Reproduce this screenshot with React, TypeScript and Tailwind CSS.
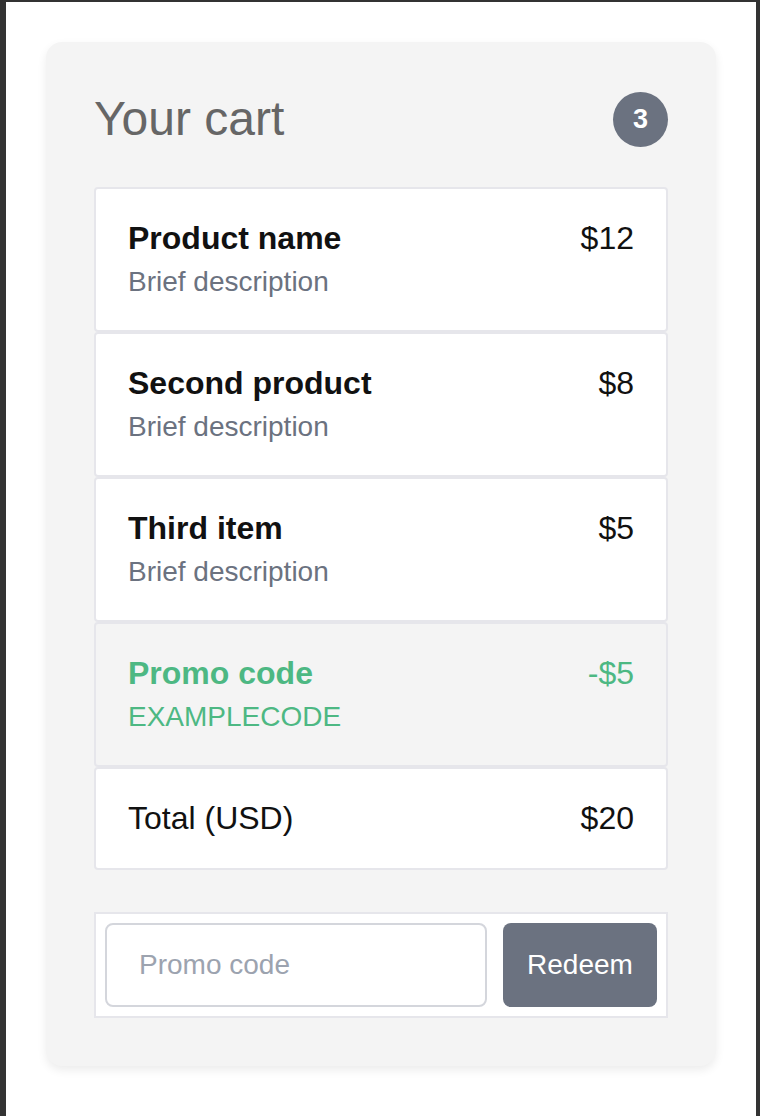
const items = [
  { name: 'Product name', desc: 'Brief description', price: '$12' },
  { name: 'Second product', desc: 'Brief description', price: '$8' },
  { name: 'Third item', desc: 'Brief description', price: '$5' },
]

function Row({ name, desc, price }: { name: string; desc: string; price: string }) {
  return (
    <li className="flex justify-between items-start bg-white border-2 border-[#e6e6eb] rounded-[4px] px-[32px] pt-[25px] pb-[28px]">
      <div>
        <h6 className="text-[32px] leading-[48px] font-bold text-[#111]">{name}</h6>
        <p className="text-[28px] leading-[40px] text-[#6b7280]">{desc}</p>
      </div>
      <span className="text-[32px] leading-[48px] text-[#111]">{price}</span>
    </li>
  )
}

export default function App() {
  return (
    <div
      className="min-h-[1116px] bg-white border-t-2 border-l-[6px] border-r-4 border-[#333] p-[40px]"
      style={{ fontFamily: '"Liberation Sans", Arial, sans-serif' }}
    >
      <div className="bg-[#f4f4f4] rounded-2xl shadow-[0_4px_10px_rgba(0,0,0,0.08)] px-[48px] pt-[48px] pb-[48px]">
        <div className="flex justify-between items-center mb-[39px]">
          <h4 className="text-[48px] leading-[58px] text-[#666]">Your cart</h4>
          <span className="w-[55px] h-[55px] rounded-full bg-[#6b7280] text-white text-[27px] font-bold flex items-center justify-center">
            3
          </span>
        </div>

        <ul className="flex flex-col">
          {items.map((it) => (
            <Row key={it.name} {...it} />
          ))}
          <li className="flex justify-between items-start bg-[#f4f4f4] border-2 border-[#e6e6eb] rounded-[4px] px-[32px] pt-[25px] pb-[28px]">
            <div className="text-[#4db883]">
              <h6 className="text-[32px] leading-[48px] font-bold">Promo code</h6>
              <p className="text-[28px] leading-[40px]">EXAMPLECODE</p>
            </div>
            <span className="text-[32px] leading-[48px] text-[#4db883]">-$5</span>
          </li>
          <li className="flex justify-between items-start bg-white border-2 border-[#e6e6eb] rounded-[4px] px-[32px] pt-[25px] pb-[26px]">
            <span className="text-[32px] leading-[48px] text-[#111]">Total (USD)</span>
            <strong className="text-[32px] leading-[48px] font-normal text-[#111]">$20</strong>
          </li>
        </ul>

        <form className="mt-[42px] bg-white border-2 border-[#e6e6eb] p-[9px] flex gap-[16px]" onSubmit={(e) => e.preventDefault()}>
          <input
            type="text"
            placeholder="Promo code"
            className="flex-1 min-w-0 h-[84px] border-2 border-[#d4d6dc] rounded-[8px] px-[32px] text-[28px] text-[#111] placeholder:text-[#9ca3af] outline-none bg-white"
          />
          <button type="submit" className="w-[154px] h-[84px] rounded-[8px] bg-[#6b7280] text-white text-[28px]">
            Redeem
          </button>
        </form>
      </div>
    </div>
  )
}
